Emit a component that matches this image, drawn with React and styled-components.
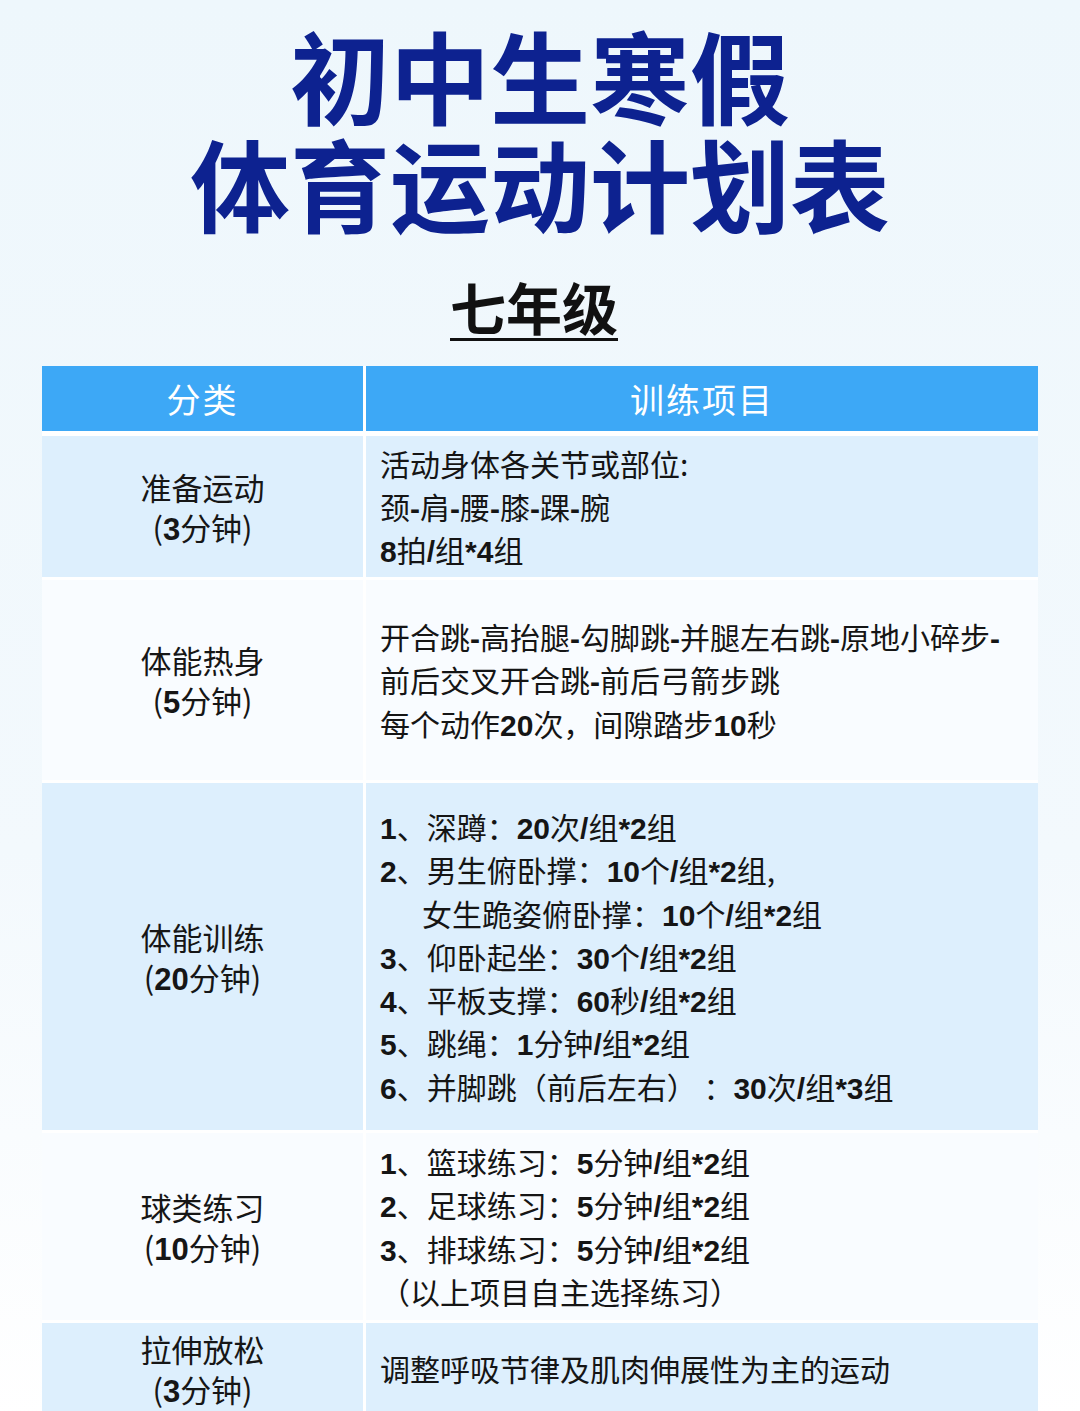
import React from "react";
import styled, { createGlobalStyle } from "styled-components";

const Global = createGlobalStyle`
  html, body { margin: 0; padding: 0; }
  body {
    background: linear-gradient(180deg, #eef7fc 0%, #f3f9fd 60%, #ffffff 100%);
    font-family: "Noto Sans CJK SC", "Noto Sans", sans-serif;
    color: #151515;
  }
`;

const Page = styled.div`
  width: 1080px;
  min-height: 1411px;
  box-sizing: border-box;
  padding: 20px 42px 0;
  display: flex;
  flex-direction: column;
  align-items: center;
  overflow: hidden;
`;

const Title = styled.h1`
  margin: 0;
  font-family: "Noto Sans CJK SC", sans-serif;
  font-weight: 700;
  font-size: 100px;
  line-height: 108px;
  color: #0d2290;
  text-align: center;
`;

const Grade = styled.h2`
  margin: 36px 0 0 -12px;
  font-family: "Noto Sans CJK SC", sans-serif;
  font-weight: 700;
  font-size: 56px;
  line-height: 67px;
  color: #111;
  text-decoration: underline;
  text-decoration-thickness: 3px;
  text-underline-offset: 8px;
`;

const Table = styled.div`
  margin-top: 27px;
  width: 996px;
  display: grid;
  grid-template-columns: 321px 1fr;
  column-gap: 3px;
  background: #ffffff;
`;

const HeadCell = styled.div`
  height: 65px;
  background: #3da8f6;
  color: #ffffff;
  font-size: 34px;
  letter-spacing: 2px;
  display: flex;
  align-items: center;
  justify-content: center;
  margin-bottom: 5px;
`;

const CatCell = styled.div`
  height: ${(p) => p.$h}px;
  margin-bottom: 3px;
  background: ${(p) => (p.$tone === "blue" ? "#ddeffd" : "#f9fcff")};
  display: flex;
  flex-direction: column;
  align-items: center;
  justify-content: center;
  font-size: 31px;
  line-height: 40px;
  color: #161616;
`;

const ItemCell = styled.div`
  height: ${(p) => p.$h}px;
  margin-bottom: 3px;
  background: ${(p) => (p.$tone === "blue" ? "#ddeffd" : "#f9fcff")};
  display: flex;
  flex-direction: column;
  justify-content: center;
  padding-left: 14px;
  font-size: 30px;
  line-height: 43.3px;
  color: #151515;
  white-space: pre;
`;

const Line = styled.div`
  height: 43.3px;
  padding-left: ${(p) => (p.$indent ? 42 : 0)}px;
`;

const CatLine = styled.div`
  height: 40px;
`;

const Num = styled.span`
  font-family: "Liberation Sans", Arial, sans-serif;
  font-weight: 700;
  line-height: 1;
`;

const Rich = ({ text }) =>
  text.split(/([0-9\/*\-]+)/).map((part, i) =>
    /^[0-9\/*\-]+$/.test(part) ? <Num key={i}>{part}</Num> : <React.Fragment key={i}>{part}</React.Fragment>
  );

const rows = [
  {
    cat: ["准备运动", "(3分钟)"],
    lines: ["活动身体各关节或部位:", "颈-肩-腰-膝-踝-腕", "8拍/组*4组"],
    tone: "blue",
    h: 141,
  },
  {
    cat: ["体能热身", "(5分钟)"],
    lines: ["开合跳-高抬腿-勾脚跳-并腿左右跳-原地小碎步-", "前后交叉开合跳-前后弓箭步跳", "每个动作20次，间隙踏步10秒"],
    tone: "white",
    h: 200,
  },
  {
    cat: ["体能训练", "(20分钟)"],
    lines: [
      "1、深蹲：20次/组*2组",
      "2、男生俯卧撑：10个/组*2组,",
      { t: "女生跪姿俯卧撑：10个/组*2组", indent: true },
      "3、仰卧起坐：30个/组*2组",
      "4、平板支撑：60秒/组*2组",
      "5、跳绳：1分钟/组*2组",
      "6、并脚跳（前后左右） ：30次/组*3组",
    ],
    tone: "blue",
    h: 347,
  },
  {
    cat: ["球类练习", "(10分钟)"],
    lines: ["1、篮球练习：5分钟/组*2组", "2、足球练习：5分钟/组*2组", "3、排球练习：5分钟/组*2组", "（以上项目自主选择练习）"],
    tone: "white",
    h: 187,
  },
  {
    cat: ["拉伸放松", "(3分钟)"],
    lines: ["调整呼吸节律及肌肉伸展性为主的运动"],
    tone: "blue",
    h: 92,
  },
];

export default function App() {
  return (
    <>
      <Global />
      <Page>
        <Title>
          初中生寒假
          <br />
          体育运动计划表
        </Title>
        <Grade>七年级</Grade>
        <Table>
          <HeadCell>分类</HeadCell>
          <HeadCell>训练项目</HeadCell>
          {rows.map((r, i) => (
            <React.Fragment key={i}>
              <CatCell $tone={r.tone} $h={r.h}>
                {r.cat.map((c, j) => (
                  <CatLine key={j}>
                    <Rich text={c} />
                  </CatLine>
                ))}
              </CatCell>
              <ItemCell $tone={r.tone} $h={r.h}>
                {r.lines.map((l, j) => {
                  const t = typeof l === "string" ? l : l.t;
                  const indent = typeof l === "string" ? false : l.indent;
                  return (
                    <Line key={j} $indent={indent}>
                      <Rich text={t} />
                    </Line>
                  );
                })}
              </ItemCell>
            </React.Fragment>
          ))}
        </Table>
      </Page>
    </>
  );
}
